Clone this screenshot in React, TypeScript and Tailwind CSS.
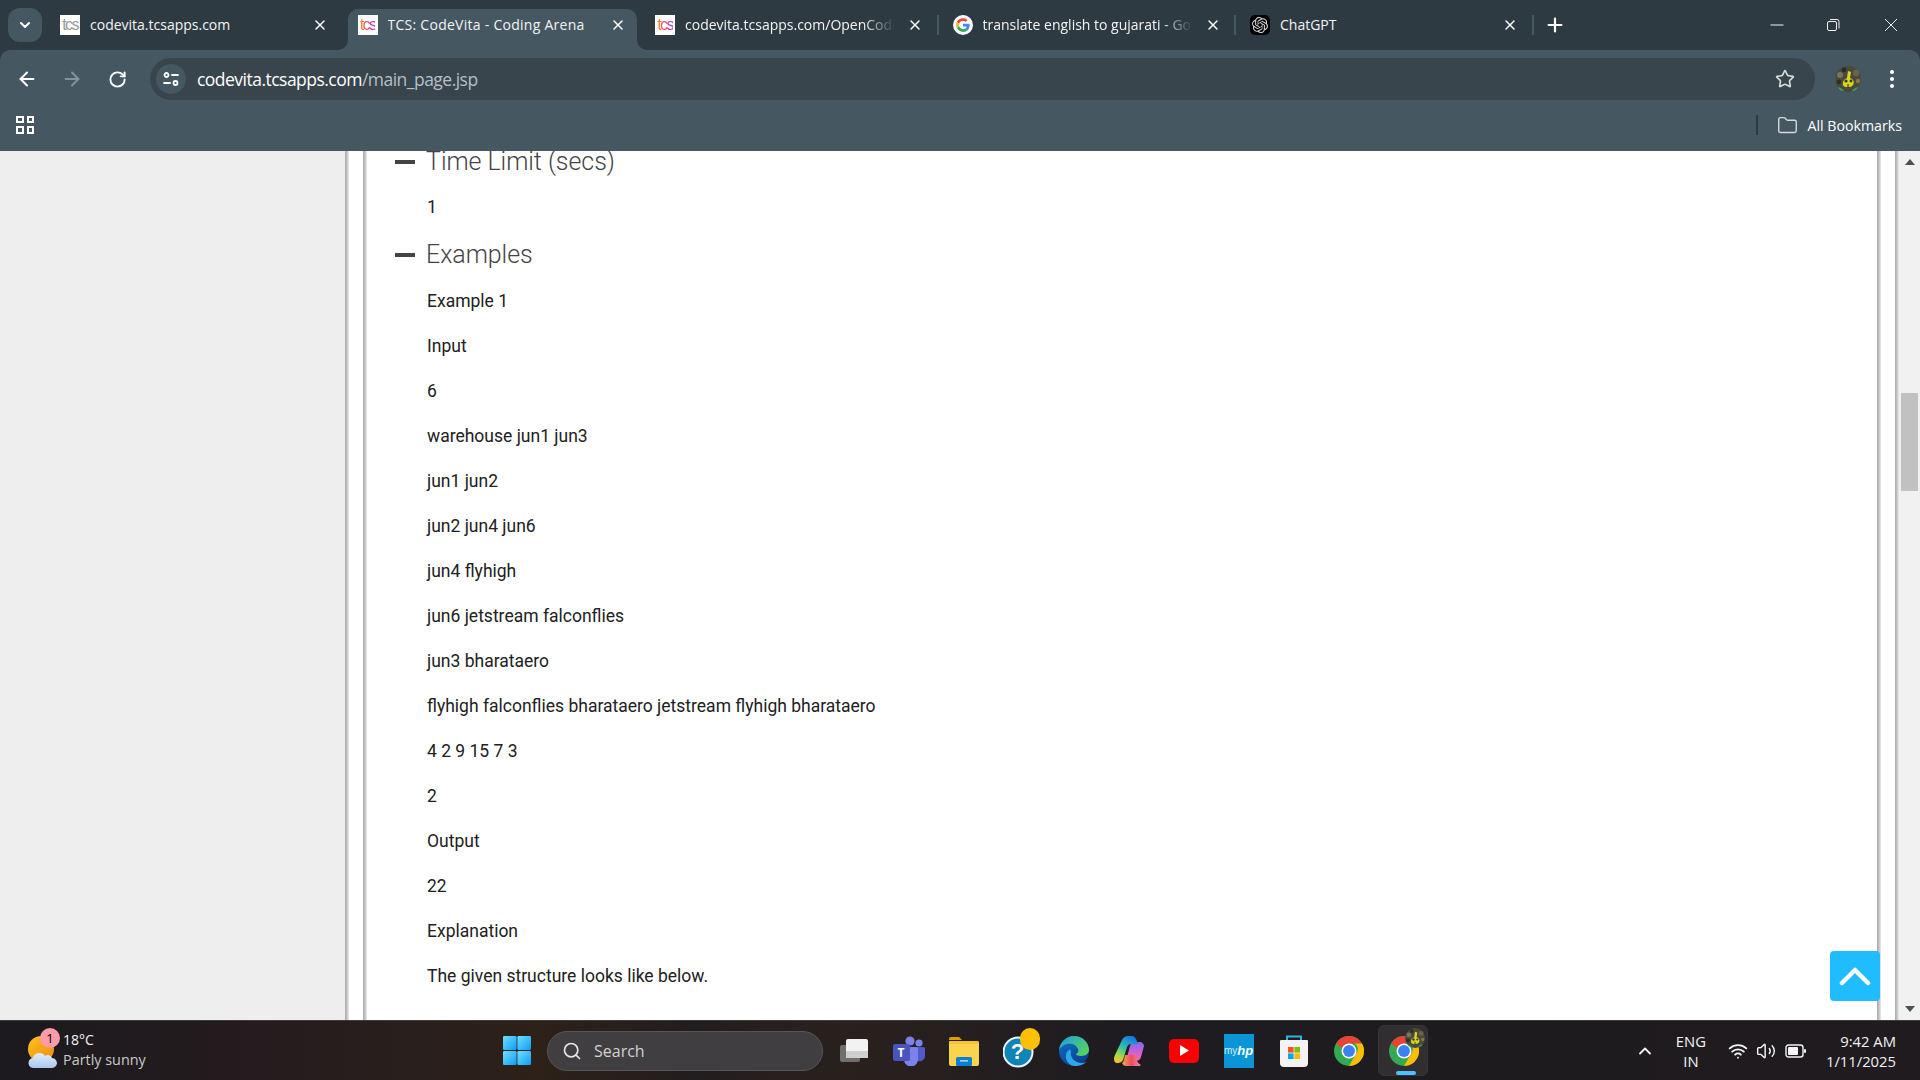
import React from "react";
import { Plus, X, ArrowLeft, ArrowRight, RotateCw, Star, Folder, ChevronDown, ChevronUp, Search, Wifi, Volume2 } from "lucide-react";
import { SiOpenai } from "react-icons/si";

function TcsIcon({ gray }: { gray?: boolean }) {
  return (
    <span className="w-5 h-5 shrink-0 bg-white flex items-center justify-center overflow-hidden">
      <span className={`text-[16px] tracking-[-1.6px] leading-none font-['Liberation_Sans',sans-serif] ${gray ? "text-[#9a9a9a]" : "bg-[linear-gradient(90deg,#f59a23,#e8336d_50%,#9b3fc4)] bg-clip-text text-transparent"}`}>tcs</span>
    </span>
  );
}

function GoogleG({ size = 20 }: { size?: number }) {
  return (
    <svg width={size} height={size} viewBox="0 0 48 48" className="shrink-0">
      <circle cx="24" cy="24" r="24" fill="#fff" />
      <g transform="translate(7.5 7.5) scale(0.6875)">
        <path fill="#EA4335" d="M24 9.5c3.5 0 6.7 1.2 9.2 3.6l6.9-6.9C35.9 2.4 30.5 0 24 0 14.6 0 6.5 5.4 2.6 13.2l8 6.2C12.5 13.7 17.8 9.5 24 9.5z" />
        <path fill="#4285F4" d="M47 24.5c0-1.6-.1-3.1-.4-4.5H24v9h12.9c-.6 3-2.2 5.5-4.7 7.2l7.7 6c4.5-4.2 7.1-10.3 7.1-17.7z" />
        <path fill="#FBBC05" d="M10.5 28.6c-.5-1.5-.8-3-.8-4.6s.3-3.2.8-4.6l-8-6.2C.9 16.5 0 20.1 0 24s.9 7.5 2.6 10.8l7.9-6.2z" />
        <path fill="#34A853" d="M24 48c6.5 0 11.9-2.1 15.9-5.8l-7.7-6c-2.2 1.5-4.9 2.3-8.2 2.3-6.2 0-11.5-4.2-13.4-9.9l-8 6.2C6.5 42.6 14.6 48 24 48z" />
      </g>
    </svg>
  );
}

function Tab({ icon, title, fade, active, sep }: { icon: React.ReactNode; title: string; fade?: boolean; active?: boolean; sep?: boolean }) {
  return (
    <div className="relative w-[297.5px] h-[50px] shrink-0 flex items-center pl-[14px]">
      {active && (
        <>
          <div className="absolute left-[4px] right-[4px] top-[9px] bottom-0 bg-[#455761] rounded-t-[10px]" />
          <div className="absolute left-[-6px] bottom-0 w-[10px] h-[10px] bg-[#455761]"><div className="w-full h-full bg-[#2e3a41] rounded-br-[10px]" /></div>
          <div className="absolute right-[-6px] bottom-0 w-[10px] h-[10px] bg-[#455761]"><div className="w-full h-full bg-[#2e3a41] rounded-bl-[10px]" /></div>
        </>
      )}
      <div className="relative flex items-center w-full">
        {icon}
        <span className={`ml-[10px] w-[212px] overflow-hidden whitespace-nowrap text-[14px] leading-5 text-[#f2f4f5] font-['Open_Sans',sans-serif] ${active ? "tracking-[0.27px]" : ""} ${fade ? "[mask-image:linear-gradient(90deg,#000_84%,transparent_99%)]" : ""}`}>{title}</span>
        <X size={16} strokeWidth={2.2} className="ml-[10px] text-white shrink-0" />
      </div>
      {sep && <div className="absolute right-[0px] top-[15px] h-[20px] w-[2px] bg-[#455761]" />}
    </div>
  );
}

function ChromeIcon({ size = 34 }: { size?: number }) {
  return (
    <svg width={size} height={size} viewBox="0 0 48 48">
      <circle cx="24" cy="24" r="24" fill="#34A853" />
      <path fill="#EA4335" d="M24 0a24 24 0 0 1 20.8 12H24a12 12 0 0 0-11 7.2L3.2 12A24 24 0 0 1 24 0z" />
      <path fill="#FBBC05" d="M44.8 12A24 24 0 0 1 24 48l10.4-18a12 12 0 0 0-.4-18z" />
      <circle cx="24" cy="24" r="12" fill="#fff" />
      <circle cx="24" cy="24" r="9.5" fill="#3b82f0" />
    </svg>
  );
}

function Avatar({ size }: { size: number }) {
  return (
    <svg width={size} height={size} viewBox="0 0 26 26" className="shrink-0">
      <circle cx="13" cy="13" r="13" fill="#4a4a3c" />
      <circle cx="5" cy="9" r="3" fill="#77755f" />
      <circle cx="9" cy="4" r="2.4" fill="#2c2c24" />
      <circle cx="21" cy="7" r="3.2" fill="#6d6248" />
      <circle cx="4" cy="16" r="2.4" fill="#2f2f26" />
      <circle cx="23" cy="15" r="2.2" fill="#8a7a3c" />
      <path d="M8 19c-1-4 2-6 4-7l1-7 3 1-1 6c3 1 5 4 3 7-2 3-9 3-10 0z" fill="#d8d622" />
      <circle cx="11" cy="15" r="1.6" fill="#37371a" />
      <circle cx="16" cy="15" r="1.4" fill="#37371a" />
      <path d="M13 18v4" stroke="#37371a" strokeWidth="1.2" />
      <path d="M3 21c3 1 5 2 6 4-2 0-5-1-6-4zM17 25c1-2 3-3 6-4-1 2-3 4-6 4z" fill="#3aa56a" />
    </svg>
  );
}

function Tb({ children }: { children: React.ReactNode }) {
  return <div className="h-full w-[55px] shrink-0 flex items-center justify-center relative">{children}</div>;
}

function Taskbar() {
  return (
    <div className="h-[60px] shrink-0 border-t border-[#3d3c3d] bg-[linear-gradient(90deg,#1c1a1f_0%,#251c1e_15%,#2d2119_28%,#221d1e_36%,#2a211e_44%,#1e1c20_58%,#1f1b1e_100%)] flex items-center relative text-white font-['Open_Sans',sans-serif]">
      {/* weather */}
      <div className="w-[500px] pl-[28px] shrink-0 flex items-center">
        <div className="relative w-[30px] h-[38px] shrink-0">
          <svg width="30" height="38" viewBox="0 0 30 38" className="absolute left-0 top-0">
            <defs>
              <linearGradient id="sun" x1="0" y1="0" x2="1" y2="1"><stop offset="0" stopColor="#fcc21b" /><stop offset="1" stopColor="#f08a10" /></linearGradient>
              <linearGradient id="cl" x1="0" y1="0" x2="0" y2="1"><stop offset="0" stopColor="#e2edfb" /><stop offset="1" stopColor="#a9c6ef" /></linearGradient>
            </defs>
            <circle cx="13" cy="17" r="13" fill="url(#sun)" />
            <path d="M6 36a5 5 0 0 1-1-10c1-5 9-7 12-2 2-2 6-1 7 2 3 0 5 3 5 5s-2 5-5 5z" fill="url(#cl)" />
          </svg>
          <span className="absolute left-[12px] top-[-4px] w-5 h-5 rounded-full bg-[#ff9aa8] text-black text-[13px] leading-5 text-center">1</span>
        </div>
        <div className="ml-[5px] leading-[20px] -mt-[2px]">
          <div className="text-[14px] text-[#f4f4f4]">18°C</div>
          <div className="text-[14.4px] text-[#c9c9c9]">Partly sunny</div>
        </div>
      </div>
      {/* start */}
      <div className="w-[48px] shrink-0 -ml-[1px]">
        <svg width="30" height="30" viewBox="0 0 30 30" className="ml-[3px]">
          <defs><linearGradient id="w" x1="0" y1="0" x2="1" y2="1"><stop offset="0" stopColor="#6fe0ff" /><stop offset="1" stopColor="#0f9cf5" /></linearGradient></defs>
          <rect x="1" y="0" width="13.6" height="14" rx="1.2" fill="url(#w)" />
          <rect x="15.4" y="0" width="13.6" height="14" rx="1.2" fill="url(#w)" />
          <rect x="1" y="15" width="13.6" height="14" rx="1.2" fill="url(#w)" />
          <rect x="15.4" y="15" width="13.6" height="14" rx="1.2" fill="url(#w)" />
        </svg>
      </div>
      {/* search */}
      <div className="w-[276px] h-[40px] shrink-0 rounded-full bg-[#403e40] border border-[#575557] flex items-center pl-[14px]">
        <Search size={20} strokeWidth={2} className="text-[#e6e6e6]" />
        <span className="ml-[12px] text-[16px] text-[#d2d2d2]">Search</span>
      </div>
      {/* apps */}
      <div className="flex items-center h-full ml-[3px]">
        <Tb>
          <svg width="30" height="30" viewBox="0 0 30 30">
            <rect x="1" y="9" width="20" height="17" rx="2" fill="#6f6f6f" />
            <rect x="7" y="3" width="22" height="19" rx="2" fill="#f2f2f2" />
            <rect x="7" y="15" width="22" height="7" fill="#cfcfcf" />
          </svg>
        </Tb>
        <Tb>
          <div className="relative w-[32px] h-[30px]">
            <svg width="32" height="30" viewBox="0 0 32 30" className="absolute inset-0">
              <circle cx="26" cy="7" r="3.6" fill="#7b83eb" />
              <circle cx="17" cy="5" r="4.6" fill="#7b83eb" />
              <path d="M20 11h10a2 2 0 0 1 2 2v7a5.5 5.5 0 0 1-9 4z" fill="#5059c9" />
              <path d="M10 11h13a2 2 0 0 1 2 2v10a7 7 0 0 1-14 1z" fill="#7b83eb" />
              <rect x="0" y="8" width="17" height="17" rx="2" fill="#4b53bc" />
            </svg>
            <span className="absolute left-[0px] top-[8px] w-[17px] h-[17px] text-[12px] leading-[17px] text-center font-bold text-white">T</span>
          </div>
        </Tb>
        <Tb>
          <svg width="30" height="30" viewBox="0 0 30 30">
            <path d="M0 3a2 2 0 0 1 2-2h8l3 3h-13z" fill="#d9a000" />
            <path d="M0 5h28a2 2 0 0 1 2 2v21a2 2 0 0 1-2 2H2a2 2 0 0 1-2-2z" fill="#fbd44e" />
            <path d="M0 5h28a2 2 0 0 1 2 2v1H0z" fill="#f7c331" />
            <rect x="7" y="21" width="16" height="9" rx="1.5" fill="#0d7fd1" />
            <rect x="11" y="24" width="8" height="1.6" fill="#9fd6f5" />
          </svg>
        </Tb>
        <Tb>
          <div className="relative w-[36px] h-[40px] ml-[4px] -mt-[3px]">
            <svg width="36" height="40" viewBox="0 0 36 40" className="absolute inset-0">
              <circle cx="15" cy="23" r="14.5" fill="#0f84b8" stroke="#eef6fa" strokeWidth="2" />
            </svg>
            <span className="absolute left-[0px] top-[9px] w-[30px] text-center text-[22px] leading-[28px] font-bold text-white font-['Liberation_Sans',sans-serif]">?</span>
            <span className="absolute right-[-1px] top-[-1px] w-5 h-[22px] rounded-full bg-[#fdc009]" />
          </div>
        </Tb>
        <Tb>
          <svg width="30" height="30" viewBox="0 0 30 30">
            <defs>
              <linearGradient id="e1" x1="0" y1="0" x2="1" y2="0.6"><stop offset="0" stopColor="#1b9de2" /><stop offset="1" stopColor="#54d162" /></linearGradient>
              <linearGradient id="e2" x1="0" y1="0" x2="0.6" y2="1"><stop offset="0" stopColor="#0f74c6" /><stop offset="1" stopColor="#0a3f95" /></linearGradient>
            </defs>
            <circle cx="15" cy="15" r="15" fill="url(#e2)" />
            <path d="M0 14C1 6 8 0 15 0c9 0 15 7 15 14 0 3-3 6-8 6-3 0-5-1-5-2 2-1 3-3 2-5-2-5-7-6-11-5-4 1-7 4-8 6z" fill="url(#e1)" />
            <path d="M12 16c-1 5 3 11 11 11 2 0 4-1 5-2-3 4-8 5-12 5-6 0-10-6-9-11 0-3 2-5 5-6-1 1-1 2 0 3z" fill="#2fa7e6" />
          </svg>
        </Tb>
        <Tb>
          <svg width="30" height="30" viewBox="0 0 30 30">
            <defs>
              <linearGradient id="c1" x1="0.7" y1="0" x2="0.2" y2="1"><stop offset="0" stopColor="#1477e0" /><stop offset="0.45" stopColor="#2cc0b0" /><stop offset="0.8" stopColor="#b5d63c" /><stop offset="1" stopColor="#f5c22a" /></linearGradient>
              <linearGradient id="c2" x1="0.5" y1="0" x2="0.5" y2="1"><stop offset="0" stopColor="#7a6cf0" /><stop offset="0.55" stopColor="#d05fd8" /><stop offset="1" stopColor="#f0708a" /></linearGradient>
              <linearGradient id="c3" x1="0" y1="0" x2="1" y2="0"><stop offset="0" stopColor="#f7a64a" /><stop offset="0.5" stopColor="#ea4f5e" /><stop offset="1" stopColor="#f28ab0" /></linearGradient>
            </defs>
            <path d="M16 10c1-3 3-4 6-4h4c2 0 4 2 4 4l-3 11c-1 3-3 4-6 4h-9z" fill="url(#c2)" />
            <path d="M8 4c1-2 3-4 6-4h4c2 0 3 1 4 3l2 5h-7c-2 0-3 1-4 3l-4 13c-1 2-3 3-5 3H3c-2 0-3-2-3-4 0-1 0-2 1-4z" fill="url(#c1)" />
            <path d="M11 19h12l-1 3c1 4 3 6 5 7-1 1-2 1-3 1H12c-2 0-3-1-4-3 2-1 2-4 3-8z" fill="url(#c3)" />
          </svg>
        </Tb>
        <Tb>
          <div className="w-[30px] h-[24px] rounded-[5px] bg-[#fb0000] flex items-center justify-center">
            <svg width="10" height="11" viewBox="0 0 10 11"><path d="M1 0l9 5.5L1 11z" fill="#fff" /></svg>
          </div>
        </Tb>
        <Tb>
          <div className="w-[30px] h-[34px] bg-[#0a96d6] flex items-center justify-center whitespace-nowrap text-[#d6eef9] italic">
            <span className="text-[10px] font-['Liberation_Sans',sans-serif] not-italic">my</span><span className="text-[13px] font-bold font-['Liberation_Sans',sans-serif] text-white">hp</span>
          </div>
        </Tb>
        <Tb>
          <svg width="30" height="34" viewBox="0 0 30 34">
            <path d="M8 7V2.5h14V7" fill="none" stroke="#2bb3ea" strokeWidth="2" />
            <path d="M2 6h26a1 1 0 0 1 1 1v22a4 4 0 0 1-4 4H5a4 4 0 0 1-4-4V7a1 1 0 0 1 1-1z" fill="#f3f3f3" />
            <rect x="9" y="13" width="5.6" height="5.6" fill="#f35325" />
            <rect x="15.4" y="13" width="5.6" height="5.6" fill="#81bc06" />
            <rect x="9" y="19.4" width="5.6" height="5.6" fill="#05a6f0" />
            <rect x="15.4" y="19.4" width="5.6" height="5.6" fill="#ffba08" />
          </svg>
        </Tb>
        <Tb><ChromeIcon size={30} /></Tb>
        <Tb>
          <div className="absolute left-[2px] right-[3px] top-[4px] bottom-[4px] rounded-[6px] bg-[#302e30] border border-[#363436]" />
          <div className="relative w-[30px] h-[30px]">
            <ChromeIcon size={30} />
            <span className="absolute right-[-6px] top-[-8px]"><Avatar size={20} /></span>
          </div>
          <div className="absolute bottom-[5px] left-[20px] w-5 h-[4px] rounded-full bg-[#4cc2ff]" />
        </Tb>
      </div>
      {/* tray */}
      <div className="ml-auto flex items-center pr-[24px]">
        <ChevronUp size={20} strokeWidth={2.2} className="text-[#f0f0f0]" />
        <div className="ml-[11px] w-[50px] text-center text-[14.8px] leading-[20px] text-[#f2f2f2]">ENG<br />IN</div>
        <Wifi size={20} strokeWidth={2.2} className="ml-[12px] text-[#f5f5f5]" />
        <Volume2 size={20} strokeWidth={1.7} className="ml-[8px] text-[#f5f5f5]" />
        <svg width="22" height="14" viewBox="0 0 22 14" className="ml-[9px]">
          <rect x="1" y="1" width="17" height="12" rx="2.5" fill="none" stroke="#f5f5f5" strokeWidth="1.4" />
          <rect x="3" y="3" width="10" height="8" rx="1" fill="#f5f5f5" />
          <rect x="19" y="5" width="2" height="4" rx="1" fill="#f5f5f5" />
        </svg>
        <div className="ml-[19px] text-right text-[14.8px] leading-[20px] text-[#f2f2f2] whitespace-nowrap">9:42 AM<br />1/11/2025</div>
      </div>
    </div>
  );
}

const rows = [
  "Example 1", "Input", "6", "warehouse jun1 jun3", "jun1 jun2", "jun2 jun4 jun6", "jun4 flyhigh",
  "jun6 jetstream falconflies", "jun3 bharataero", "flyhigh falconflies bharataero jetstream flyhigh bharataero",
  "4 2 9 15 7 3", "2", "Output", "22", "Explanation", "The given structure looks like below.",
];

function Heading({ children, h }: { children: string; h: string }) {
  return (
    <div className={`flex items-center ${h}`}>
      <div className="w-[20px] h-[4px] bg-[#444444] ml-[28px] mr-[11px] shrink-0" />
      <div className="text-[25px] font-light text-[#444444] leading-[30px] tracking-[-0.05px]">{children}</div>
    </div>
  );
}

function Row({ children }: { children: string }) {
  return <div className="h-[45px] flex items-center pl-[60px] text-[17.5px] text-[#212121]">{children}</div>;
}

function Shadow() {
  return <div className="w-[4px] shrink-0 bg-[linear-gradient(90deg,#a8a8a8,#c4c4c4_50%,#ececec)]" />;
}

export default function App() {
  return (
    <div className="w-[1920px] h-[1080px] flex flex-col overflow-hidden bg-white font-['Roboto',sans-serif]">
      {/* tab strip */}
      <div className="h-[50px] shrink-0 bg-[#2e3a41] flex items-center relative">
        <div className="w-[34px] h-[34px] ml-[8px] mr-[4px] -mt-[1px] rounded-[12px] bg-[#455761] flex items-center justify-center shrink-0">
          <ChevronDown size={16} strokeWidth={3} className="text-white" />
        </div>
        <Tab icon={<TcsIcon gray />} title="codevita.tcsapps.com" />
        <Tab icon={<TcsIcon />} title="TCS: CodeVita - Coding Arena" active />
        <Tab icon={<TcsIcon />} title="codevita.tcsapps.com/OpenCode" fade sep />
        <Tab icon={<GoogleG />} title="translate english to gujarati - Google" fade sep />
        <Tab icon={<span className="w-5 h-5 shrink-0 rounded-[5px] bg-black flex items-center justify-center"><SiOpenai size={16} className="text-[#d8d8d8]" /></span>} title="ChatGPT" sep />
        <Plus size={22} strokeWidth={2.4} className="text-white ml-[10px] shrink-0" />
        <div className="ml-auto flex items-center text-[#f0f0f0] pr-[21px]">
          <svg width="16" height="16" viewBox="0 0 16 16"><path d="M1.5 8h13" stroke="currentColor" strokeWidth="1" /></svg>
          <svg width="16" height="16" viewBox="0 0 16 16" className="ml-[40px]" fill="none" stroke="currentColor"><rect x="2.5" y="4.5" width="9" height="9" rx="1.5" /><path d="M5 2.5h7a2 2 0 0 1 2 2v7" /></svg>
          <svg width="16" height="16" viewBox="0 0 16 16" className="ml-[42px]" fill="none" stroke="currentColor" strokeWidth="1"><path d="M2 2l12 12M14 2L2 14" /></svg>
        </div>
      </div>
      {/* toolbar + bookmarks */}
      <div className="h-[101px] shrink-0 bg-[#2e3a41]">
        <div className="h-full bg-[#455761] rounded-t-[10px]">
          <div className="h-[50px] flex items-center pt-[8px]">
            <ArrowLeft size={22} strokeWidth={2.2} className="ml-[16px] text-white shrink-0" />
            <ArrowRight size={22} strokeWidth={2.2} className="ml-[23px] text-[#86929a] shrink-0" />
            <RotateCw size={19} strokeWidth={2.4} className="ml-[25px] text-white shrink-0" />
            <div className="ml-[23px] w-[1665px] h-[42px] rounded-full bg-[#38454d] flex items-center pl-[6px] shrink-0">
              <div className="w-[30px] h-[30px] rounded-full bg-[#455761] flex items-center justify-center shrink-0">
                <svg width="18" height="18" viewBox="0 0 18 18" fill="none" stroke="#fff" strokeWidth="1.8" strokeLinecap="round">
                  <circle cx="4.5" cy="5" r="2" /><path d="M10 5h6" /><circle cx="13.5" cy="13" r="2" /><path d="M2 13h6" />
                </svg>
              </div>
              <span className="ml-[11px] text-[17.5px] text-white font-['Open_Sans',sans-serif] tracking-[-0.52px]">codevita.tcsapps.com<span className="text-[#b5bfc5]">/main_page.jsp</span></span>
              <Star size={20} strokeWidth={2} className="ml-auto mr-[20px] text-[#d5dadd]" />
            </div>
            <span className="ml-[20px] shrink-0"><Avatar size={26} /></span>
            <svg width="6" height="20" viewBox="0 0 6 20" className="ml-[28px] shrink-0" fill="#fff"><circle cx="3" cy="3" r="2" /><circle cx="3" cy="10" r="2" /><circle cx="3" cy="17" r="2" /></svg>
          </div>
          <div className="h-[51px] flex items-center">
            <div className="ml-[16px] -mt-[2px] grid grid-cols-2 gap-[3px]">
              {[0, 1, 2, 3].map((i) => <div key={i} className="w-[7.5px] h-[7.5px] border-2 border-white" />)}
            </div>
            <div className="ml-auto flex items-center pr-[18px]">
              <div className="w-[2px] h-[20px] bg-[#2e3a41]" />
              <Folder size={21} strokeWidth={1.6} className="ml-[19px] text-[#d5dadd]" />
              <span className="ml-[9px] text-[14.2px] text-white font-['Open_Sans',sans-serif]">All Bookmarks</span>
            </div>
          </div>
        </div>
      </div>
      {/* page */}
      <div className="flex-1 min-h-0 flex relative">
        <div className="w-[345px] shrink-0 bg-[#eeeeee]" />
        <Shadow />
        <div className="w-[14px] shrink-0" />
        <Shadow />
        <div className="flex-1 min-w-0 overflow-hidden">
          <div className="-mt-[12px]">
            <Heading h="h-[46px]">Time Limit (secs)</Heading>
            <Row>1</Row>
            <Heading h="h-[49px]">Examples</Heading>
            {rows.map((r, i) => <Row key={i}>{r}</Row>)}
          </div>
        </div>
        <Shadow />
        <div className="w-[14px] shrink-0" />
        <Shadow />
        <div className="w-[21px] shrink-0 bg-[#f1f1f1] flex flex-col items-center relative">
          <svg width="10" height="6" viewBox="0 0 10 6" className="mt-[8px]"><path d="M5 0l5 6H0z" fill="#505050" /></svg>
          <div className="w-[17px] h-[98px] mt-[228px] bg-[#c1c1c1]" />
          <svg width="10" height="6" viewBox="0 0 10 6" className="mt-auto mb-[8px]"><path d="M5 6l5-6H0z" fill="#505050" /></svg>
        </div>
        <div className="absolute left-[1830px] top-[800px] w-[50px] h-[50px] rounded-[4px] bg-[#1fbcff] flex items-center justify-center">
          <svg width="32" height="20" viewBox="0 0 32 20" fill="none" stroke="#fff" strokeWidth="4.5" strokeLinecap="round" strokeLinejoin="round"><path d="M3 17L16 4l13 13" /></svg>
        </div>
      </div>
      <Taskbar />
    </div>
  );
}
